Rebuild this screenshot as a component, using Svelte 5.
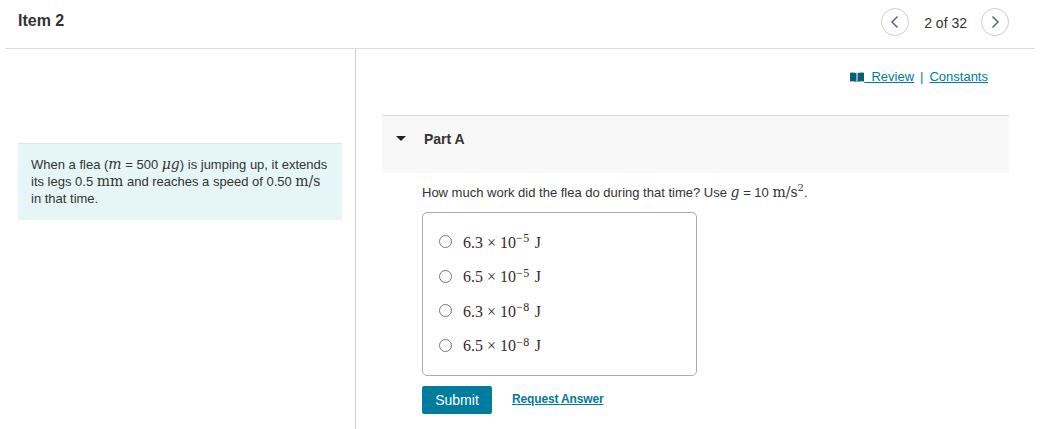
<style>
:global(body){margin:0;background:#fff;font-family:"Liberation Sans",Arial,sans-serif;color:#333;font-size:14px;overflow:hidden}
.page{width:1040px;height:429px;display:flex;flex-direction:column;overflow:hidden}
.top{height:48px;margin:0 5px;padding:0 26px 0 13px;border-bottom:1px solid #ddd;display:flex;align-items:center;justify-content:space-between}
.title{font-size:16px;font-weight:700;color:#333;margin-top:-7px}
.pager{display:flex;align-items:center;margin-top:-5px;font-size:14px}
.nav{width:28px;height:28px;box-sizing:border-box;border:1px solid #ccc;border-radius:50%;background:#fff;padding:0;display:flex;align-items:center;justify-content:center}
.count{padding:0 14px 0 15px;margin-top:2px}
.main{flex:1;display:flex;min-height:0}
.left{border-right:1px solid #ccc;padding:94px 13px 0 18px;width:324px}
.note{background:#e6f6f7;border-top:1px solid #dde3e6;padding:12px 13px 14px 13px;line-height:17px;font-size:13px;height:50px;width:298px}
.right{flex:1;padding:0 31px 0 26px}
.links{height:66px;display:flex;justify-content:flex-end;align-items:flex-start;padding:20px 21px 0 0;box-sizing:border-box;color:#007c9e;font-size:13px}
.links a{color:#007c9e;text-decoration:underline}
.links svg{margin:3px 0 0 0}
.sep{margin:0 6px;color:#007c9e}
.part{height:58px;background:#f8f8f8;border-top:1px solid #ddd;display:flex;align-items:flex-start;padding-top:15px;box-sizing:border-box}
.caret{width:0;height:0;border-left:5.500px solid transparent;border-right:5.500px solid transparent;border-top:5.500px solid #222;margin:5px 0 0 14px}
.part b{margin-left:18px;font-size:14px;color:#333}
.body{padding-left:40px}
.q{margin-top:11px;line-height:18px;height:20px;font-size:13px}
.m{font-family:"DejaVu Serif",serif;font-size:14px;line-height:1;font-weight:400}
sup{font-size:10px;line-height:0}
.box{margin-top:8px;width:275px;height:164px;box-sizing:border-box;border:1px solid #aaa;border-radius:5px;padding:12px 0 0 16px;display:flex;flex-direction:column}
.opt{height:34.500px;display:flex;align-items:center;gap:11px}
.radio{width:13px;height:13px;box-sizing:border-box;border:1px solid #767676;border-radius:50%;background:#fff;margin-top:-1px}
.eq{font-family:"Liberation Serif",serif;font-size:16px;color:#3a2a28;white-space:pre;padding-top:1px}
.eq sup{font-size:12px;position:relative;top:1px;letter-spacing:.5px;margin:0 1px 0 0}
.actions{display:flex;align-items:flex-start;margin-top:10px}
.submit{width:70px;height:28px;background:#007c9e;color:#fff;border:0;border-radius:2px;font:14px "Liberation Sans",Arial,sans-serif;padding:0}
.req{margin-left:20px;font-size:12px;font-weight:700;color:#007c9e;text-decoration:underline;margin-top:6px;letter-spacing:-.15px}
</style>

<div class="page">
  <header class="top">
    <div class="title">Item 2</div>
    <div class="pager">
      <button class="nav" aria-label="Previous"><svg width="10" height="14" viewBox="0 0 10 14"><path d="M7.5 1.5 2 7l5.500 5.500" fill="none" stroke="#4a6a8a" stroke-width="1.500"/></svg></button>
      <span class="count">2 of 32</span>
      <button class="nav" aria-label="Next"><svg width="10" height="14" viewBox="0 0 10 14"><path d="M2.500 1.500 8 7l-5.500 5.500" fill="none" stroke="#4a6a8a" stroke-width="1.500"/></svg></button>
    </div>
  </header>
  <div class="main">
    <aside class="left">
      <div class="note">When a flea (<i class="m">m</i> = 500 <i class="m">μg</i>) is jumping up, it extends its legs 0.5 <span class="m">mm</span> and reaches a speed of 0.50 <span class="m">m/s</span> in that time.</div>
    </aside>
    <section class="right">
      <div class="links">
        <svg width="14" height="10" viewBox="0 0 14 10"><path d="M0 .8Q3.500 0 6.500 1.200V10Q3.500 8.800 0 9.600zM14 .8Q10.500 0 7.500 1.200V10q3-1.200 6.500-.4z" fill="#0b5c78"/></svg>
        <a href="#r">&nbsp;&nbsp;Review</a><span class="sep">|</span><a href="#c">Constants</a>
      </div>
      <div class="part"><span class="caret"></span><b>Part A</b></div>
      <div class="body">
        <div class="q">How much work did the flea do during that time? Use <i class="m">g</i> = 10 <span class="m">m/s<sup>2</sup></span>.</div>
        <div class="box">
          {#each ["6.3 × 10","6.5 × 10","6.3 × 10","6.5 × 10"] as t, i}
            <div class="opt"><span class="radio"></span><span class="eq">{t}<sup>−{i<2?5:8}</sup> J</span></div>
          {/each}
        </div>
        <div class="actions">
          <button class="submit">Submit</button>
          <a class="req" href="#a">Request Answer</a>
        </div>
      </div>
    </section>
  </div>
</div>
